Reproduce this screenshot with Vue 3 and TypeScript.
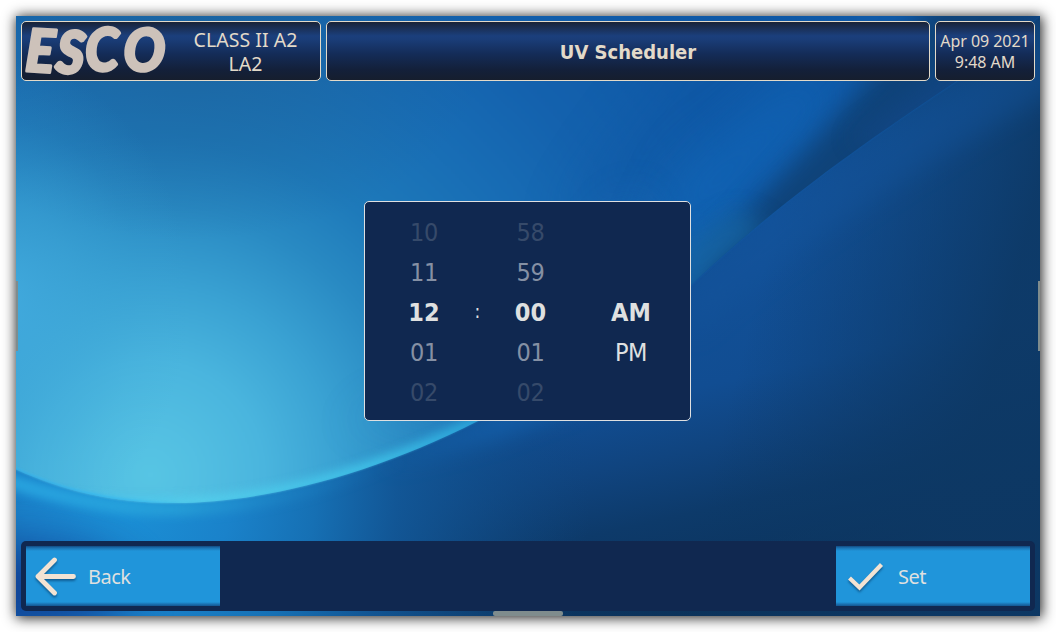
<script setup lang="ts">
interface PickerRow {
  label: string
  tone: 'far' | 'near' | 'active' | 'plain' | 'empty'
}

const hours: PickerRow[] = [
  { label: '10', tone: 'far' },
  { label: '11', tone: 'near' },
  { label: '12', tone: 'active' },
  { label: '01', tone: 'near' },
  { label: '02', tone: 'far' },
]
const minutes: PickerRow[] = [
  { label: '58', tone: 'far' },
  { label: '59', tone: 'near' },
  { label: '00', tone: 'active' },
  { label: '01', tone: 'near' },
  { label: '02', tone: 'far' },
]
const periods: PickerRow[] = [
  { label: '', tone: 'empty' },
  { label: '', tone: 'empty' },
  { label: 'AM', tone: 'active' },
  { label: 'PM', tone: 'plain' },
  { label: '', tone: 'empty' },
]
</script>

<template>
  <div class="stage">
    <main class="window">
      <svg class="wallpaper" viewBox="16 16 1024 600" aria-hidden="true">
        <defs>
          <linearGradient id="base" gradientUnits="userSpaceOnUse" x1="640" y1="60" x2="760" y2="600">
            <stop offset="0" stop-color="#115aa8" />
            <stop offset=".3" stop-color="#12529a" />
            <stop offset=".6" stop-color="#114d92" />
            <stop offset=".71" stop-color="#10447f" />
            <stop offset=".82" stop-color="#0d3a6a" />
            <stop offset="1" stop-color="#0b325a" />
          </linearGradient>
          <linearGradient id="rightShade" gradientUnits="userSpaceOnUse" x1="830" y1="0" x2="1070" y2="60">
            <stop offset="0" stop-color="#0d3864" stop-opacity="0" />
            <stop offset="1" stop-color="#0d3864" stop-opacity=".9" />
          </linearGradient>
          <radialGradient id="pool" gradientUnits="userSpaceOnUse" cx="130" cy="500" r="460">
            <stop offset="0" stop-color="#1b90d6" />
            <stop offset=".22" stop-color="#1a82ca" />
            <stop offset=".4" stop-color="#1670b4" />
            <stop offset=".58" stop-color="#125898" stop-opacity=".9" />
            <stop offset="1" stop-color="#0f4880" stop-opacity="0" />
          </radialGradient>
          <radialGradient id="orb" gradientUnits="userSpaceOnUse" cx="150" cy="475" r="670">
            <stop offset="0" stop-color="#57c5e4" />
            <stop offset=".07" stop-color="#53bfe2" />
            <stop offset=".17" stop-color="#4ab5de" />
            <stop offset=".28" stop-color="#3aa2d3" />
            <stop offset=".4" stop-color="#298ac3" />
            <stop offset=".5" stop-color="#1e7aba" />
            <stop offset=".66" stop-color="#186db5" />
            <stop offset=".8" stop-color="#1462ae" />
            <stop offset="1" stop-color="#105aa8" />
          </radialGradient>
          <radialGradient id="corner" gradientUnits="userSpaceOnUse" cx="0" cy="0" r="1" gradientTransform="translate(190 40) scale(300 200)">
            <stop offset="0" stop-color="#1d6097" stop-opacity=".65" />
            <stop offset=".5" stop-color="#1d6097" stop-opacity=".35" />
            <stop offset="1" stop-color="#1d6097" stop-opacity="0" />
          </radialGradient>
          <radialGradient id="leftGlow" gradientUnits="userSpaceOnUse" cx="0" cy="0" r="1" gradientTransform="translate(0 300) scale(190 240)">
            <stop offset="0" stop-color="#43ace0" stop-opacity=".9" />
            <stop offset=".4" stop-color="#3fa8da" stop-opacity=".55" />
            <stop offset=".75" stop-color="#3aa3d6" stop-opacity=".15" />
            <stop offset="1" stop-color="#3aa3d6" stop-opacity="0" />
          </radialGradient>
          <linearGradient id="rim" gradientUnits="userSpaceOnUse" x1="16" y1="0" x2="620" y2="0">
            <stop offset="0" stop-color="#38bbf0" />
            <stop offset=".3" stop-color="#54cfec" />
            <stop offset=".6" stop-color="#40c4ea" />
            <stop offset=".75" stop-color="#2faee0" />
            <stop offset="1" stop-color="#1a73c0" stop-opacity="0" />
          </linearGradient>
          <linearGradient id="halo" gradientUnits="userSpaceOnUse" x1="16" y1="0" x2="380" y2="0">
            <stop offset="0" stop-color="#2fb4ea" />
            <stop offset=".45" stop-color="#2aa6da" />
            <stop offset="1" stop-color="#1a78c0" stop-opacity=".1" />
          </linearGradient>
          <filter id="b2" x="-20%" y="-20%" width="140%" height="140%" color-interpolation-filters="sRGB"><feGaussianBlur stdDeviation=".9" /></filter>
          <filter id="b5" x="-20%" y="-30%" width="140%" height="160%" color-interpolation-filters="sRGB"><feGaussianBlur stdDeviation="5" /></filter>
          <filter id="b11" x="-30%" y="-30%" width="160%" height="160%" color-interpolation-filters="sRGB"><feGaussianBlur stdDeviation="12" /></filter>
          <filter id="b20" x="-60%" y="-60%" width="220%" height="220%" color-interpolation-filters="sRGB"><feGaussianBlur stdDeviation="24" /></filter>
          <clipPath id="orbClip">
            <path d="M0 0H1060L955 82C880 132 780 200 690 286L640 315C570 365 530 395 478 421C370 476 260 503 175 503C105 503 53 488 0 462Z" />
          </clipPath>
          <clipPath id="streakClip">
            <path d="M600 0H1060L955 82C880 132 780 200 690 286L600 340Z" />
          </clipPath>
        </defs>
        <rect x="16" y="16" width="1024" height="600" fill="url(#base)" />
        <rect x="16" y="16" width="1024" height="600" fill="url(#rightShade)" />
        <rect x="16" y="16" width="1024" height="600" fill="url(#pool)" />
        <ellipse cx="10" cy="590" rx="120" ry="44" fill="#103f94" opacity=".9" filter="url(#b20)" />
        <path d="M380 466L478 422L640 340L640 380L500 435Z" fill="#1668b8" opacity=".7" filter="url(#b11)" />
        <path d="M-10 474C55 499 115 510 178 509C265 507 330 487 400 460" fill="none" stroke="url(#halo)" stroke-width="14" opacity=".7" filter="url(#b5)" />

        <path d="M0 0H1060L955 82C880 132 780 200 690 286L640 315C570 365 530 395 478 421C370 476 260 503 175 503C105 503 53 488 0 462Z" fill="url(#orb)" filter="url(#b2)" />
        <g clip-path="url(#orbClip)">
          <rect x="16" y="16" width="600" height="300" fill="url(#corner)" />
          <rect x="16" y="40" width="220" height="500" fill="url(#leftGlow)" />
          <path d="M640 190C500 390 420 400 340 425L460 415L640 310Z" fill="#397fc4" opacity=".4" filter="url(#b20)" />
          <path d="M60 502C100 507 140 507 175 506C260 505 370 478 478 424C530 398 570 365 640 315" fill="none" stroke="url(#rim)" stroke-width="18" opacity=".85" filter="url(#b5)" />
          <path d="M0 464C53 490 105 503 175 507" fill="none" stroke="#37b8f0" stroke-width="7" filter="url(#b2)" opacity=".6" />
          <path d="M740 -20C680 60 600 140 560 230L650 190L820 16Z" fill="#0f57a3" opacity=".4" filter="url(#b20)" />
          <path d="M830 60L690 160L640 260L720 220L820 110Z" fill="#1166b8" opacity=".7" filter="url(#b20)" />
        </g>
        <path d="M690 290C775 205 885 130 1060 20V90C930 160 790 250 690 340Z" fill="#14549c" opacity=".45" filter="url(#b11)" />
        <g clip-path="url(#streakClip)">
          <path d="M950 -20L858 92C812 148 750 208 700 262L690 320L780 260L1060 100V-20Z" fill="#0f4379" filter="url(#b11)" />
          <path d="M1060 0L940 75L850 140L900 150L1060 60Z" fill="#14488a" opacity=".6" filter="url(#b11)" />
          <path d="M735 212L680 250L680 310C705 280 735 250 770 225Z" fill="#1767a6" opacity=".8" filter="url(#b11)" />
        </g>
      </svg>

      <header class="topbar">
        <section class="plate identity">
          <svg class="logo" viewBox="0 0 148 58" role="img" aria-label="ESCO">
            <text transform="scale(.92 1)" x="3 36 69 109" y="49 50 49 47" rotate="3 5 -1 5">ESCO</text>
          </svg>
          <div class="model"><span>CLASS II A2</span><span>LA2</span></div>
        </section>
        <h1 class="plate title">UV Scheduler</h1>
        <section class="plate clock"><span>Apr 09 2021</span><span>9:48 AM</span></section>
      </header>

      <section class="content">
        <div class="picker">
          <div class="column">
            <span v-for="row in hours" :key="row.label" class="row" :class="row.tone">{{ row.label }}</span>
          </div>
          <span class="colon">:</span>
          <div class="column">
            <span v-for="row in minutes" :key="row.label" class="row" :class="row.tone">{{ row.label }}</span>
          </div>
          <div class="column periods">
            <span v-for="(row, i) in periods" :key="i" class="row" :class="row.tone">{{ row.label }}</span>
          </div>
        </div>
      </section>

      <footer class="actions">
        <button class="action" type="button">
          <svg class="icon" viewBox="0 0 60 60" aria-hidden="true">
            <path d="M28.5 14L12 30.5L28.5 47M12 30.5H47.5" stroke-width="4.8" stroke-linecap="round" stroke-linejoin="round" />
          </svg>
          <span>Back</span>
        </button>
        <button class="action" type="button">
          <svg class="icon" viewBox="0 0 60 60" aria-hidden="true">
            <path d="M13.5 32L23.5 41.5L45.5 18.5" stroke-width="4.2" />
          </svg>
          <span>Set</span>
        </button>
      </footer>

      <i class="handle left"></i>
      <i class="handle right"></i>
      <i class="handle bottom"></i>
    </main>
  </div>
</template>

<style>
body {
  background: #fff;
  overflow: hidden;
}
</style>

<style scoped>
.stage {
  box-sizing: border-box;
  width: 1056px;
  height: 632px;
  padding: 16px;
  background: #fff;
  font-family: "Noto Sans", "DejaVu Sans", sans-serif;
}
.window {
  position: relative;
  display: flex;
  flex-direction: column;
  box-sizing: border-box;
  width: 1024px;
  height: 600px;
  padding: 5px;
  background: #115aa8;
  box-shadow: 1px 1px 12px 1px rgba(0, 0, 0, .85);
}
.wallpaper {
  position: absolute;
  inset: 0;
  width: 1024px;
  height: 600px;
  overflow: hidden;
}
.topbar {
  position: relative;
  display: flex;
  gap: 5px;
  height: 60px;
}
.plate {
  box-sizing: border-box;
  display: flex;
  margin: 0;
  border: 1px solid #e3dac9;
  border-radius: 5px;
  background: linear-gradient(#192338 0%, #1b3f7c 24%, #1a3d78 30%, #142c58 55%, #13203a 82%, #161e2e 100%);
  color: #e3dac9;
}
.identity {
  width: 300px;
}
.logo {
  width: 148px;
  height: 58px;
  flex: none;
  overflow: visible;
}
.logo text {
  font: italic 900 59px Lato, sans-serif;
  fill: #cdc2ba;
  stroke: #cdc2ba;
  stroke-width: 3px;
  stroke-linejoin: round;
}
.model {
  flex: 1;
  display: flex;
  flex-direction: column;
  align-items: center;
  justify-content: center;
  font-size: 19.5px;
  line-height: 24px;
  letter-spacing: .05px;
  padding: 1px 0 0 1px;
}
.title {
  flex: 1;
  align-items: center;
  justify-content: center;
  padding-top: 2px;
  font: bold 20px "DejaVu Sans Condensed", "DejaVu Sans", sans-serif;
  font-stretch: condensed;
}
.clock {
  width: 100px;
  flex-direction: column;
  align-items: center;
  justify-content: center;
  font-size: 16px;
  line-height: 21px;
  letter-spacing: -.05px;
  white-space: nowrap;
  padding-top: 1px;
}
.content {
  position: relative;
  flex: 1;
  display: flex;
  justify-content: center;
  align-items: center;
  padding-right: 1px;
}
.picker {
  box-sizing: border-box;
  display: grid;
  grid-template-columns: 66px 40px 67px 1fr;
  align-items: center;
  width: 327px;
  height: 220px;
  padding: 4px 0 0 26px;
  border: 1px solid #dfe0e1;
  border-radius: 5px;
  background: #102850;
  color: #dfe0e0;
  font-family: "DejaVu Sans Condensed", "DejaVu Sans", sans-serif;
  font-stretch: condensed;
  font-size: 25px;
}
.column {
  display: flex;
  flex-direction: column;
}
.row {
  height: 40px;
  line-height: 40px;
  text-align: center;
  letter-spacing: -.4px;
}
.periods {
  padding-left: 8px;
}
.near {
  color: #8590a4;
}
.far {
  color: #364a6a;
}
.active {
  font-weight: bold;
  letter-spacing: 0;
}
.colon {
  padding: 0 0 4px 1px;
  text-align: center;
  font-size: 19px;
}
.actions {
  position: relative;
  display: flex;
  justify-content: space-between;
  box-sizing: border-box;
  height: 70px;
  padding: 5px;
  border-radius: 5px;
  background: #102850;
}
.action {
  display: flex;
  align-items: center;
  width: 194px;
  height: 60px;
  padding: 0;
  border: 0;
  background: linear-gradient(#114a82 0, #1b73b3 2px, #2095da 5px, #2095da 56px, #1b73b3 58px, #135690 60px);
  color: #dfe0e0;
  font-family: inherit;
  font-size: 20px;
  letter-spacing: -.5px;
}
.icon {
  width: 60px;
  height: 60px;
  margin-right: 2px;
  fill: none;
  stroke: #f3e3d3;
  filter: drop-shadow(0 2px 1px rgba(0, 40, 80, .5));
}
.handle {
  position: absolute;
  background: #7f8c8d;
}
.left,
.right {
  top: 265px;
  width: 2px;
  height: 70px;
}
.left {
  left: 0;
}
.right {
  right: 0;
}
.bottom {
  bottom: 0;
  left: 477px;
  width: 70px;
  height: 5px;
  border-radius: 2px;
}
</style>
